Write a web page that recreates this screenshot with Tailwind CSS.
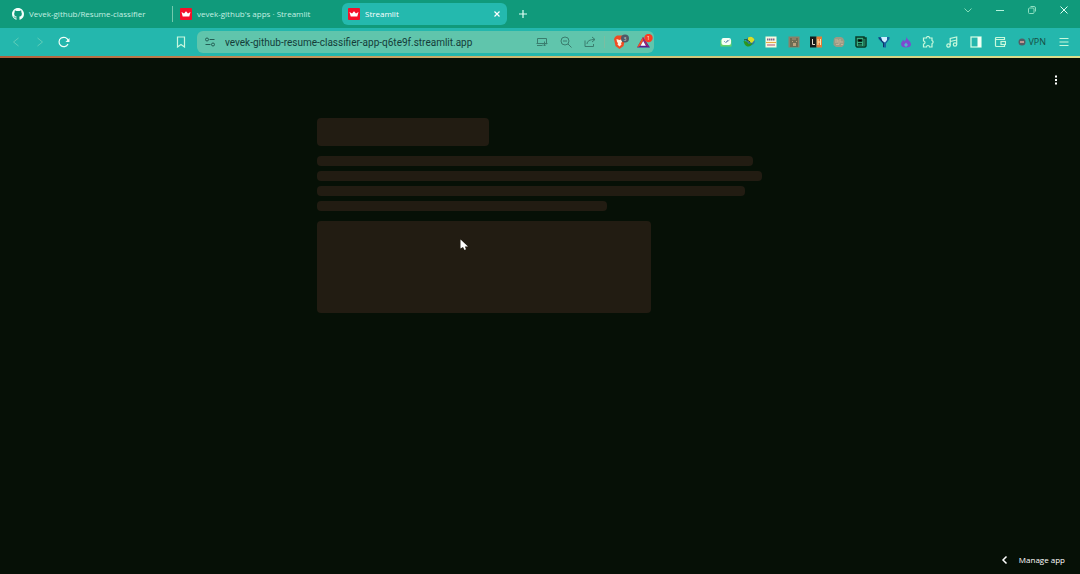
<!DOCTYPE html>
<html lang="en">
<head>
<meta charset="utf-8">
<meta name="viewport" content="width=device-width, initial-scale=1">
<title>Streamlit</title>
<script src="https://cdn.jsdelivr.net/npm/@tailwindcss/browser@4"></script>
</head>
<body class="flex min-h-screen flex-col overflow-hidden bg-[#061006] font-['Open_Sans',sans-serif] text-white">
<svg class="hidden">
  <symbol id="crown" viewBox="0 0 12 12"><rect width="12" height="12" rx="1" fill="#f5102a"/><path d="M1.500 4 4 5.500 6 3.200 8 5.500 10.500 4 9.300 8.500H2.700Z" fill="#fff"/></symbol>
</svg>

<header>
  <!-- Tab strip -->
  <div class="flex h-7 items-center bg-[#109a7b] text-[8px]">
    <nav class="flex h-full items-center" aria-label="Tabs">
      <a href="#" class="flex w-[172px] items-center gap-[5px] pl-3 text-[#c4f0e2]">
        <svg class="size-3 shrink-0" viewBox="0 0 16 16" fill="#f4fffb"><path d="M8 0C3.580 0 0 3.580 0 8c0 3.540 2.290 6.530 5.470 7.590.4.070.550-.170.550-.380 0-.190-.010-.820-.010-1.490-2.010.370-2.530-.490-2.690-.940-.090-.230-.480-.940-.820-1.130-.280-.150-.680-.520-.010-.530.630-.010 1.080.580 1.230.820.720 1.210 1.870.870 2.330.660.070-.520.280-.870.510-1.070-1.780-.2-3.640-.890-3.640-3.950 0-.870.310-1.590.820-2.150-.080-.2-.360-1.020.080-2.120 0 0 .670-.210 2.200.820.640-.180 1.320-.270 2-.270s1.360.090 2 .270c1.530-1.040 2.200-.820 2.200-.820.440 1.100.160 1.920.080 2.120.510.560.820 1.270.820 2.150 0 3.070-1.870 3.750-3.650 3.950.290.250.540.730.540 1.480 0 1.070-.010 1.930-.010 2.200 0 .210.150.460.550.380A8 8 0 0 0 16 8c0-4.420-3.580-8-8-8Z"/></svg>
        <span class="whitespace-nowrap">Vevek-github/Resume-classifier</span>
      </a>
      <a href="#" class="flex h-4 w-[170px] items-center gap-[5px] border-l border-[#72c9ad] pl-[7px] text-[#c4f0e2]">
        <svg class="size-3 shrink-0"><use href="#crown"/></svg>
        <span class="whitespace-nowrap">vevek-github's apps · Streamlit</span>
      </a>
      <div class="flex h-[22px] w-[165px] items-center rounded-md bg-[#24b9ae] pr-1 pl-1.5">
        <a href="#" aria-current="page" class="flex flex-1 items-center gap-[5px]">
          <svg class="size-3 shrink-0"><use href="#crown"/></svg><span>Streamlit</span>
        </a>
        <button aria-label="Close tab" class="grid size-3 place-items-center"><svg class="size-2" viewBox="0 0 8 8" stroke="#fff" stroke-width="1.200"><path d="m1.500 1.500 5 5m0-5-5 5"/></svg></button>
      </div>
    </nav>
    <button aria-label="New tab" class="ml-2.5 grid size-3 place-items-center"><svg class="size-3" viewBox="0 0 12 12" stroke="#e0fff5" stroke-width="1.200"><path d="M6 2v8M2 6h8"/></svg></button>
    <div class="mr-2.5 mb-2 ml-auto flex items-center gap-5">
      <button aria-label="Search tabs"><svg class="size-3" viewBox="0 0 12 12" fill="none" stroke="#82ddb9"><path d="m2.500 4.500 3.500 3.500 3.500-3.500"/></svg></button>
      <button aria-label="Minimize"><svg class="size-3" viewBox="0 0 12 12" fill="none" stroke="#b5f3dc"><path d="M2 6.500h8"/></svg></button>
      <button aria-label="Restore"><svg class="size-3" viewBox="0 0 12 12" fill="none" stroke="#8cdfc1"><rect x="2.500" y="4" width="5.500" height="5.500" rx="1"/><path d="M4.500 2.500H8a1.500 1.500 0 0 1 1.500 1.500v3.500"/></svg></button>
      <button aria-label="Close window"><svg class="size-3" viewBox="0 0 12 12" fill="none" stroke="#dcfff2"><path d="m2.500 2.500 7 7m0-7-7 7"/></svg></button>
    </div>
  </div>

  <!-- Toolbar -->
  <div class="flex h-7 items-center bg-[#24b7ad] px-2.5">
    <div class="flex w-[60px] shrink-0 items-center justify-between">
      <button aria-label="Back"><svg class="size-3" viewBox="0 0 12 12" fill="none" stroke="#5fcdb8"><path d="m8.500 2-5 4 5 4"/></svg></button>
      <button aria-label="Forward"><svg class="size-3" viewBox="0 0 12 12" fill="none" stroke="#5fcdb8"><path d="m3.500 2 5 4-5 4"/></svg></button>
      <button aria-label="Reload"><svg class="size-3" viewBox="0 0 12 12" fill="none" stroke="#f2fff9" stroke-width="1.200"><path d="M10 8a4.700 4.700 0 1 1 .2-3.500"/><path d="M11.500 2v4H7.500Z" fill="#f2fff9" stroke="none"/></svg></button>
    </div>
    <button aria-label="Bookmark" class="ml-[105px]"><svg class="size-3" viewBox="0 0 12 12" fill="none" stroke="#c8f7df" stroke-width="1.200"><path d="M2.500 1h7v10L6 8.500 2.500 11Z"/></svg></button>
    <div class="ml-2.5 flex h-[22px] w-[457px] shrink-0 items-center rounded-md bg-[#60c5ac] pl-[7px]">
      <button aria-label="Site settings"><svg class="size-3" viewBox="0 0 12 12" fill="none" stroke="#245f55"><circle cx="3" cy="3.500" r="1.500"/><path d="M5.500 3.500h5M1.500 8.500h5"/><circle cx="9" cy="8.500" r="1.500"/></svg></button>
      <input aria-label="Address" value="vevek-github-resume-classifier-app-q6te9f.streamlit.app" class="ml-[9px] min-w-0 flex-1 bg-transparent font-[Roboto,sans-serif] text-[10px] text-[#143c39] outline-none">
      <div class="flex items-center gap-3 text-[#3a7d6e]">
        <button aria-label="Install app"><svg class="size-3" viewBox="0 0 12 12" fill="none" stroke="currentColor"><path d="M1.500 7.500v-5h9v5M.5 7.500h11M1 9.500h5.500M8.500 5.500v4.500m-1.500-1.500 1.500 1.500 1.500-1.500"/></svg></button>
        <button aria-label="Zoom"><svg class="size-3" viewBox="0 0 12 12" fill="none" stroke="currentColor"><circle cx="5" cy="5" r="4"/><path d="m8 8 3.500 3.500M3 5h4"/></svg></button>
        <button aria-label="Share"><svg class="size-3" viewBox="0 0 12 12" fill="none" stroke="currentColor"><path d="M1 4.500v6h8.500V8M3 8c.3-3 2.500-4.500 8-4.500M8 1l3 2.500L8 6"/></svg></button>
      </div>
      <div class="ml-2 flex h-3 items-center gap-1.5 border-l border-[#7bbda1] pl-[7px]">
        <button aria-label="Brave Shields"><svg class="h-4 w-[18px]" viewBox="0 0 18 16"><path d="m3 3 2-1.500h5L12 3l1 2-1.500 7L7.500 15 3.500 12 2 5Z" fill="#f04b22"/><path d="m4.500 5 3 1 3-1-.5 3-1 1 .5 1.500-2 2-2-2L6 9 5 8Z" fill="#fff1dc"/><circle cx="13" cy="4.500" r="4" fill="#505965"/><text x="13" y="6.500" font-size="5" text-anchor="middle" fill="#d4dcdc">3</text></svg></button>
        <button aria-label="Brave Rewards"><svg class="h-4 w-[18px]" viewBox="0 0 18 16"><path d="M7 3 1 13.500h13Z" fill="#541f91"/><path d="M7 3 1 13.500 4 12l3.500-6Z" fill="#f05723"/><path d="m7 3 6 10.500-2.500-2L6.500 5Z" fill="#b52067"/><path d="m7.200 7-2.700 4.800h5.400Z" fill="#fff"/><circle cx="12.500" cy="4" r="4.200" fill="#fb3c22"/><text x="12.500" y="6" font-size="5" text-anchor="middle" fill="#fff">1</text></svg></button>
      </div>
    </div>

    <div class="ml-auto flex items-center gap-3">
      <div class="flex w-[214px] items-center justify-between">
        <button aria-label="Mail extension"><svg class="size-3" viewBox="0 0 12 12"><path d="M.5 4h11v6.500H.5Z" fill="#68d46b"/><rect x="1.500" y="2" width="9.500" height="7" rx="2" fill="#f5fff5"/><path d="m4 5 1.500 1.500L8 4M6 6.500 9.500 4" fill="none" stroke="#6c8bb5" stroke-width=".8"/></svg></button>
        <button aria-label="Download manager"><svg class="size-3" viewBox="0 0 12 12"><circle cx="7.500" cy="5" r="4.300" fill="#307ba2"/><path d="M5 1.500c3-2 6 0 6.500 2.500L9 7 5 5Z" fill="#d6de27"/><path d="M.5 5c3 0 4 1 5 3L9.500 7c-1 4-5.500 5-8 1Z" fill="#2c961e"/><path d="M1 4c2-1 4 0 6 2" stroke="#244e22" fill="none"/></svg></button>
        <button aria-label="JSON extension"><svg class="size-3" viewBox="0 0 12 12"><rect x=".5" y=".5" width="11" height="11" fill="#f9f8df"/><path d="M2 3.500h8" stroke="#7d6690" stroke-width="2" stroke-dasharray="1.500 .5"/><path d="M1 6.500h10" stroke="#e8ad44"/><path d="M2 9h8" stroke="#ad5380"/></svg></button>
        <button aria-label="Bear extension"><svg class="size-3" viewBox="0 0 12 12"><path d="M.5.500h11v11H.5Z" fill="#8b8068"/><path d="M2 2h2v2h4V2h2v9H2Z" fill="#6d6c53"/><path d="M4 5h1v1H4Zm4 0h1v1H8ZM5 7h3v3H5Z" fill="#baa17e"/></svg></button>
        <button aria-label="LeetHub"><svg class="size-3" viewBox="0 0 12 12"><path d="M0 .5h6.500v11H0Z" fill="#161b19"/><path d="M6.500 .5H12v11H6.500Z" fill="#e47c39"/><path d="M2.500 3v5.500H5" stroke="#e8ddcb" fill="none"/><path d="M8 3v6m2.500-6v6M8 6h2.500" stroke="#ffe2aa" fill="none"/></svg></button>
        <button aria-label="Brain extension"><svg class="size-3" viewBox="0 0 12 12"><path d="m1 2.500 2-1.500h5l2 1 1.500 3-.5 4-2 2H3L.5 9V6Z" fill="#9a9b85"/><path d="M2 4h3v2H2m5-3v3h3M3 8.500h3V6m2 2.500h2" stroke="#c5b299" fill="none"/></svg></button>
        <button aria-label="Reader extension"><svg class="size-3" viewBox="0 0 12 12"><path d="M1 1h8v1h2v8l-1 1H2l-1-1Z" fill="#39ae82" stroke="#073b28" stroke-width="1.500"/><path d="M3 3.500h4v2H3ZM3 7.500h4M3 9h4M9 2v8" stroke="#073b28"/></svg></button>
        <button aria-label="Funnel extension"><svg class="size-3" viewBox="0 0 12 12"><path d="M.5 1h11v2L8 7.500v4H5v-4L.5 3Z" fill="#1764a0"/><path d="M3 1h6v3L7 6.500 4.500 5Z" fill="#d0efff"/><path d="M1 1.500 5.500 7v4" fill="none" stroke="#103464"/></svg></button>
        <button aria-label="Flame extension"><svg class="size-3" viewBox="0 0 12 12"><path d="M6.500.5C7 4 11 5 11 8.500c0 2-2 3-5 3s-5-1-5-3.500C1 6 3 5.500 3 3.500L4.500 5.500C5.500 4 6.500 3 6.500.5Z" fill="#7c4bd0"/><path d="m6 6.500 2 2.500-2 2-2-2Z" fill="#4ab9ca"/></svg></button>
        <button aria-label="Extensions"><svg class="size-3" viewBox="0 0 12 12" fill="none" stroke="#c8f9dc" stroke-width="1.200"><path d="M1.500 2h3a1.500 1.500 0 0 1 3 0H10v2.500a1.700 1.700 0 0 1 0 3.200V11H7.500a1.500 1.500 0 0 0-3 0h-3V8a1.500 1.500 0 0 0 0-3Z"/></svg></button>
      </div>
      <button aria-label="Media controls"><svg class="size-3" viewBox="0 0 12 12" fill="none" stroke="#c8f9dc" stroke-width="1.200"><circle cx="2.500" cy="9.500" r="1.700"/><circle cx="9" cy="8.500" r="1.700"/><path d="M4.200 9.500V2.500l6.500-1.500v7.500M4.200 5.500l6.500-1.500"/></svg></button>
      <button aria-label="Side panel"><svg class="size-3" viewBox="0 0 12 12"><rect x="1" y="1" width="10" height="10" fill="none" stroke="#d5ffe7" stroke-width="1.200"/><path d="M7.500 1H11v10H7.500Z" fill="#f1fff5"/></svg></button>
      <button aria-label="Wallet"><svg class="size-3" viewBox="0 0 12 12" fill="none" stroke="#c8f9dc" stroke-width="1.200"><path d="M10.500 4V1.500h-8a1 1 0 0 0-1 1v7a1 1 0 0 0 1 1h8V8.500M1.500 3.500h9"/><rect x="7" y="5.500" width="4.500" height="3"/></svg></button>
      <button class="flex items-center gap-0.5 text-[9px] text-[#174c43]"><svg class="size-2" viewBox="0 0 8 8"><circle cx="4" cy="4" r="3.500" fill="#555c65"/><path d="M2 4h4" stroke="#e3aaa0" stroke-width="1.500"/></svg>VPN</button>
      <button aria-label="Menu"><svg class="size-3" viewBox="0 0 12 12" stroke="#c8f9dc" stroke-width="1.200"><path d="M1.500 2.500h9M1.500 6h9M1.500 9.500h9"/></svg></button>
    </div>
  </div>
  <div class="h-0.5 bg-linear-to-r from-[#b0603c] via-[#cdbb72] to-[#dbe08c]"></div>
</header>

<main class="flex flex-1 flex-col" aria-busy="true">
  <div class="flex justify-end pt-4 pr-[18px]">
    <button aria-label="App menu"><svg class="size-3" viewBox="0 0 12 12" fill="#fff"><path d="M5 1.500h2v2H5Zm0 3.500h2v2H5Zm0 3.500h2v2H5Z"/></svg></button>
  </div>
  <div class="mx-auto mt-8 w-[446px]">
    <div class="h-7 w-[172px] rounded bg-[#221c12]"></div>
    <div class="mt-2.5 flex flex-col gap-[5px]">
      <div class="h-2.5 w-[436px] rounded bg-[#221c12]"></div>
      <div class="h-2.5 w-[445px] rounded bg-[#221c12]"></div>
      <div class="h-2.5 w-[428px] rounded bg-[#221c12]"></div>
      <div class="h-2.5 w-[290px] rounded bg-[#221c12]"></div>
    </div>
    <div class="mt-2.5 h-[92px] w-[334px] rounded bg-[#221c12]"></div>
  </div>
  <button class="mt-auto mr-[15px] mb-2 ml-auto flex items-center gap-2 text-[8px] font-medium">
    <svg class="size-3" viewBox="0 0 12 12" fill="none" stroke="#fff" stroke-width="1.500"><path d="M7.500 2.500 4 6l3.500 3.500"/></svg>Manage app
  </button>
</main>

<svg class="pointer-events-none absolute top-[239px] left-[460px] h-3 w-2" viewBox="0 0 8 12"><path d="M.5.500v9L3 8l1.500 3 1.500-.7L4.800 7.500H8Z" fill="#fff"/></svg>
</body>
</html>
